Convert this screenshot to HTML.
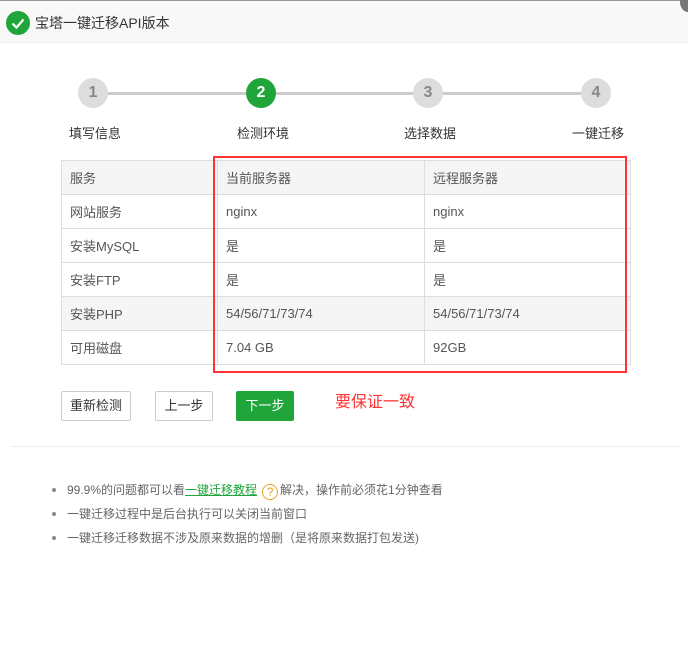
<!DOCTYPE html>
<html><head><meta charset="utf-8"><style>
*{margin:0;padding:0;box-sizing:border-box}
body{width:688px;height:646px;background:#fff;font-family:"Liberation Sans","Noto Sans CJK SC",sans-serif;font-size:13px;color:#555;position:relative;overflow:hidden}
.hd{position:absolute;left:0;top:0;width:688px;height:43px;background:#f8f8f8;border-top:1px solid #999;border-bottom:1px solid #eee}
.hd .ic{position:absolute;left:6px;top:10px;width:24px;height:24px;border-radius:50%;background:#20a53a}
.hd .t{position:absolute;left:35px;top:12px;font-size:14px;color:#333}
.x{position:absolute;left:680px;top:-8px;width:16px;height:20px;border-radius:50%;background:#777}
.line{position:absolute;top:92px;height:3px;background:#ccc;left:93px;width:503px}
.c{position:absolute;top:78px;width:30px;height:30px;border-radius:50%;background:#ddd;color:#888;font-weight:bold;font-size:16px;text-align:center;line-height:30px}
.c.on{background:#20a53a;color:#fff}
.lb{position:absolute;top:123px;font-size:13px;color:#333}
table{position:absolute;left:61px;top:160px;width:570px;border-collapse:collapse}
td{border:1px solid #ddd;height:34px;padding-left:8px;font-size:13px;color:#555}
tr.g td{background:#f5f5f5}
.red{position:absolute;left:213px;top:156px;width:414px;height:217px;border:2px solid #f33}
.btn{position:absolute;top:391px;height:30px;border:1px solid #ccc;border-radius:2px;font-size:13px;color:#333;text-align:center;line-height:28px;background:#fff}
.note{position:absolute;left:335px;top:388px;font-size:16px;color:#f33}
.sep{position:absolute;left:10px;top:446px;width:670px;height:1px;background:#eee}
ul{position:absolute;left:52px;top:481px;list-style:none}
li{font-size:12px;color:#666;height:24px;position:relative;padding-left:15px}
li:before{content:"";position:absolute;left:0;top:7px;width:4px;height:4px;border-radius:50%;background:#888}
a{color:#20a53a;text-decoration:underline}
.q{display:inline-block;width:16px;height:16px;border:1px solid #f0a020;border-radius:50%;color:#f0a020;text-align:center;line-height:14px;font-size:12px;margin:0 2px 0 5px;vertical-align:-2px}
</style></head><body>
<div class="hd"><div class="ic"><svg width="24" height="24" viewBox="0 0 24 24"><path d="M6.5 12.5l4 4 7-8" stroke="#fff" stroke-width="2.2" fill="none"/></svg></div><div class="t">宝塔一键迁移API版本</div></div>
<div class="x"></div>
<div class="line"></div>
<div class="c" style="left:78px">1</div>
<div class="c on" style="left:246px">2</div>
<div class="c" style="left:413px">3</div>
<div class="c" style="left:581px">4</div>
<div class="lb" style="left:69px">填写信息</div>
<div class="lb" style="left:237px">检测环境</div>
<div class="lb" style="left:404px">选择数据</div>
<div class="lb" style="left:572px">一键迁移</div>
<table>
<tr class="g"><td style="width:156px">服务</td><td style="width:207px">当前服务器</td><td>远程服务器</td></tr>
<tr><td>网站服务</td><td>nginx</td><td>nginx</td></tr>
<tr><td>安装MySQL</td><td>是</td><td>是</td></tr>
<tr><td>安装FTP</td><td>是</td><td>是</td></tr>
<tr class="g"><td>安装PHP</td><td>54/56/71/73/74</td><td>54/56/71/73/74</td></tr>
<tr><td>可用磁盘</td><td>7.04 GB</td><td>92GB</td></tr>
</table>
<div class="red"></div>
<div class="btn" style="left:61px;width:70px">重新检测</div>
<div class="btn" style="left:155px;width:58px">上一步</div>
<div class="btn" style="left:236px;width:58px;background:#20a53a;border-color:#20a53a;color:#fff">下一步</div>
<div class="note">要保证一致</div>
<div class="sep"></div>
<ul>
<li>99.9%的问题都可以看<a>一键迁移教程</a><span class="q">?</span>解决，操作前必须花1分钟查看</li>
<li>一键迁移过程中是后台执行可以关闭当前窗口</li>
<li>一键迁移迁移数据不涉及原来数据的增删（是将原来数据打包发送)</li>
</ul>
</body></html>
